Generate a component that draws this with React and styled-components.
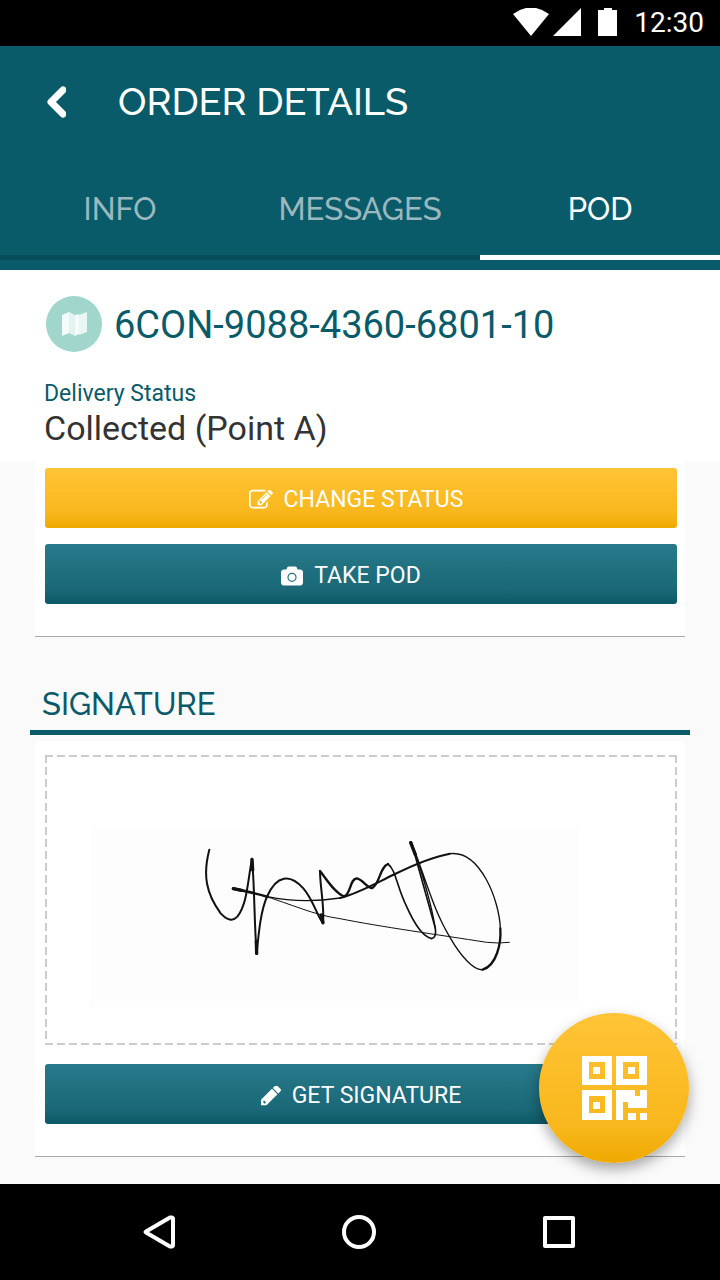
import React from "react";
import styled, { createGlobalStyle, css } from "styled-components";

const teal = "#0a5b69";

const GlobalStyle = createGlobalStyle`
  *, *::before, *::after { box-sizing: border-box; }
  body { margin: 0; background: #fafafa; font-family: Roboto, "Liberation Sans", sans-serif; }
  button { font: inherit; border: 0; padding: 0; margin: 0; cursor: pointer; }
  svg { display: block; flex: none; }
  h1, h2, p, dl, dd { margin: 0; font-weight: 400; }
`;

const Screen = styled.div`
  display: flex;
  flex-direction: column;
  min-height: 100vh;
`;

const StatusBar = styled.div`
  display: flex;
  align-items: center;
  justify-content: flex-end;
  height: 46px;
  padding-right: 16px;
  background: #000;
  color: #fff;
`;

const Clock = styled.time`
  margin-left: 15px;
  font-size: 28px;
  line-height: 32px;
`;

const Header = styled.header`
  background: ${teal};
  color: #fff;
  padding-bottom: 10px;
  font-family: Raleway, Lato, "Liberation Sans", sans-serif;
`;

const TitleRow = styled.div`
  display: flex;
  align-items: center;
  height: 112px;
  padding-left: 40px;
  gap: 46px;
`;

const BackButton = styled.button`
  display: flex;
  align-items: center;
  justify-content: center;
  width: 32px;
  height: 48px;
  background: none;
  color: #fff;
`;

const Title = styled.h1`
  font-size: 38px;
  font-weight: 500;
  line-height: 44px;
`;

const Tabs = styled.nav`
  display: grid;
  grid-template-columns: repeat(3, 1fr);
`;

const Tab = styled.button`
  height: 102px;
  padding-top: 4px;
  background: none;
  font-size: 31px;
  font-weight: 500;
  line-height: 36px;
  color: ${(p) => (p.$active ? "#fff" : "#9ab8be")};
  border-bottom: 5px solid ${(p) => (p.$active ? "#fff" : "#084c59")};
`;

const Main = styled.main`
  position: relative;
  flex: 1;
  padding-bottom: 26px;
`;

const Summary = styled.section`
  background: #fff;
  height: 192px;
  padding: 26px 44px 0;
`;

const OrderRow = styled.div`
  display: flex;
  align-items: center;
  gap: 12px;
  padding-left: 2px;
`;

const MapBadge = styled.span`
  display: flex;
  align-items: center;
  justify-content: center;
  width: 56px;
  height: 56px;
  border-radius: 50%;
  background: #a0d6cc;
`;

const OrderNumber = styled.h2`
  padding-top: 2px;
  font-size: 38px;
  line-height: 48px;
  color: ${teal};
`;

const StatusList = styled.dl`
  padding-top: 28px;
`;

const StatusLabel = styled.dt`
  font-size: 23px;
  line-height: 28px;
  color: ${teal};
`;

const StatusValue = styled.dd`
  font-size: 34px;
  line-height: 40px;
  color: #333;
`;

const Panel = styled.section`
  display: flex;
  flex-direction: column;
  margin: 0 35px;
  padding: ${(p) => p.$top}px 8px 32px 10px;
  background: #fff;
  border-bottom: 1px solid #aaa;
`;

const amber = css`linear-gradient(#ffc436, #f8b71c 75%, #efa900)`;
const petrol = css`linear-gradient(#287a8a, #1a6878 75%, #0b5866)`;

const ActionButton = styled.button`
  display: flex;
  align-items: center;
  justify-content: center;
  gap: 11px;
  height: 60px;
  padding: 3px ${(p) => p.$trail || 0}px 0 0;
  border-radius: 3px;
  background: ${(p) => (p.$primary ? amber : petrol)};
  color: #fff;
  font-size: 23px;
  line-height: 28px;

  & + & { margin-top: 16px; }
`;

const SectionTitle = styled.h2`
  margin: 48px 30px 6px;
  padding: 0 12px 7px;
  border-bottom: 5px solid ${teal};
  font-family: Raleway, Lato, "Liberation Sans", sans-serif;
  font-size: 31px;
  font-weight: 500;
  line-height: 38px;
  color: ${teal};
`;

const dashX = "repeating-linear-gradient(90deg, #ccc 0 8px, transparent 8px 12px)";
const dashY = "repeating-linear-gradient(#ccc 0 8px, transparent 8px 12px)";

const SignaturePad = styled.div`
  display: flex;
  align-items: center;
  padding: 71px 99px 38px 45px;
  margin-bottom: 19px;
  background:
    ${dashX} top / 100% 2px no-repeat,
    ${dashX} bottom / 100% 2px no-repeat,
    ${dashY} left / 2px 100% no-repeat,
    ${dashY} right / 2px 100% no-repeat;
`;

const SignatureSheet = styled.div`
  flex: 1;
  height: 181px;
  background: #fdfdfd;
`;

const ScanButton = styled.button`
  position: absolute;
  right: 31px;
  bottom: 21px;
  display: flex;
  align-items: center;
  justify-content: center;
  width: 150px;
  height: 150px;
  border-radius: 50%;
  background: ${amber};
  box-shadow: 0 6px 14px rgba(0, 0, 0, 0.35);
`;

const SystemNav = styled.nav`
  display: grid;
  grid-template-columns: repeat(3, 200px);
  justify-content: center;
  height: 96px;
  background: #000;
`;

const NavButton = styled.button`
  display: flex;
  align-items: center;
  justify-content: center;
  background: none;
`;

const SystemIcons = () => (
  <svg width="106" height="30" viewBox="0 0 106 30" fill="#fff" aria-hidden="true">
    <path d="M0 6Q18-7 36 6L18 28z" />
    <path d="M68 0v28H40z" />
    <path d="M85 2h6V0h8v2h5v26H85z" />
  </svg>
);

const EditIcon = () => (
  <svg width="24" height="24" viewBox="0 0 1792 1792" fill="currentColor" aria-hidden="true">
    <path d="M888 1184l116-116-152-152-116 116v56h96v96h56zm440-720q-16-16-33 1l-350 350q-17 17-1 33t33-1l350-350q17-17 1-33zm80 594v190q0 119-84.500 203.500t-203.500 84.500h-832q-119 0-203.500-84.500t-84.500-203.500v-832q0-119 84.500-203.500t203.500-84.500h832q63 0 117 25 15 7 18 23 3 17-9 29l-49 49q-14 14-32 8-23-6-45-6h-832q-66 0-113 47t-47 113v832q0 66 47 113t113 47h832q66 0 113-47t47-113v-126q0-13 9-22l64-64q15-15 35-7t20 29zm-96-738l288 288-672 672h-288v-288zm444 132l-92 92-288-288 92-92q28-28 68-28t68 28l152 152q28 28 28 68t-28 68z" />
  </svg>
);

const CameraIcon = () => (
  <svg width="22" height="20" viewBox="0 0 1920 1664" fill="currentColor" aria-hidden="true">
    <path
      fillRule="evenodd"
      d="M1664 256q106 0 181 75t75 181v896q0 106-75 181t-181 75h-1408q-106 0-181-75t-75-181v-896q0-106 75-181t181-75h224l51-136q19-49 69.500-84.500t103.500-35.500h512q53 0 103.500 35.500t69.500 84.500l51 136zM960 550a400 400 0 1 0 0 800a400 400 0 1 0 0-800zM960 650a300 300 0 1 1 0 600a300 300 0 1 1 0-600z"
    />
  </svg>
);

const PencilIcon = () => (
  <svg width="20" height="20" viewBox="128 256 1515 1408" fill="currentColor" aria-hidden="true">
    <path
      fillRule="evenodd"
      d="M960 416l416 416-832 832h-416v-416zM370 1310l-91 91v60h75v75h60l91-91zM1643 512q0 53-37 90l-166 166-416-416 166-165q36-38 90-38 53 0 91 38l235 234q37 39 37 91z"
    />
  </svg>
);

const MapIcon = () => (
  <svg width="26" height="26" viewBox="0 0 26 26" aria-hidden="true">
    <path d="M1 4l7-3v21l-7 3z" fill="#f4fbfa" />
    <path d="M8 1l6 3v21l-6-3z" fill="#e3f3f0" />
    <path d="M14 4l4-1v20l-4 2z" fill="#f4fbfa" />
    <path d="M18 4l8-3v20l-8 3z" fill="#e9f6f3" />
  </svg>
);

const QrIcon = () => (
  <svg width="64" height="64" viewBox="0 0 64 64" fill="#fff" fillRule="evenodd" overflow="visible" aria-hidden="true">
    <path d="M0 0h30v29H0zM7 6v17h16V6zM11 11h7v7h-7z" />
    <path d="M34 0h31v29H34zM41 6v17h16V6zM46 11h7v7h-7z" />
    <path d="M0 34h30v30H0zM7 40v17h16V40zM11 46h7v7h-7z" />
    <path d="M34 34h19v6h5v-6h7v18H46v-6h-5v18h-7zM46 57h8v7h-8zM58 57h7v7h-7z" />
  </svg>
);

const Signature = () => (
  <svg
    width="488"
    height="181"
    viewBox="270 18 1464 543"
    fill="none"
    stroke="#111"
    strokeLinecap="round"
    strokeLinejoin="round"
    role="img"
    aria-label="Customer signature"
  >
    <g transform="translate(540 0)">
      <path strokeWidth="6" d="M88 89C68 165 78 220 122 280Q152 312 172 290C202 250 202 190 216 116C224 200 222 300 230 402C236 340 242 270 262 228C290 165 330 160 370 205C400 240 410 285 429 310C434 260 420 200 420 153" />
      <path strokeWidth="7" d="M420 153C440 178 465 220 492 229C514 222 508 178 530 175C550 178 560 205 577 204C600 190 600 140 624 132" />
      <path strokeWidth="5" d="M624 132C648 150 650 200 680 260C700 305 728 350 755 356Q770 352 766 325L694 66" />
      <path strokeWidth="4" d="M766 325C752 240 720 140 694 66C742 190 760 270 810 352C840 405 880 452 908 449" />
      <path strokeWidth="7" d="M908 449C950 436 964 370 961 325" />
      <path strokeWidth="4" d="M961 325C958 240 900 90 810 101" />
      <path strokeWidth="6" d="M810 101C760 110 700 135 645 162C590 188 540 218 480 234" />
      <path strokeWidth="4" d="M480 234C400 246 330 244 262 230" />
      <path strokeWidth="8" d="M262 230Q210 216 160 206" />
      <path strokeWidth="3" d="M240 224C340 254 400 285 480 296C600 320 780 345 920 367Q955 371 988 367" />
      <path strokeWidth="10" d="M692 68L706 104M160 206L185 211M216 118L218 150M229 365L230 400M424 285L429 308" />
    </g>
  </svg>
);

export default function App() {
  return (
    <Screen>
      <GlobalStyle />
      <StatusBar>
        <SystemIcons />
        <Clock>12:30</Clock>
      </StatusBar>
      <Header>
        <TitleRow>
          <BackButton aria-label="Back">
            <svg width="20" height="32" viewBox="0 0 20 32" fill="none" stroke="currentColor" strokeWidth="7" strokeLinecap="round" strokeLinejoin="round" aria-hidden="true">
              <path d="M17 4L5 16L17 28" />
            </svg>
          </BackButton>
          <Title>ORDER DETAILS</Title>
        </TitleRow>
        <Tabs aria-label="Order sections">
          <Tab>INFO</Tab>
          <Tab>MESSAGES</Tab>
          <Tab $active aria-current="page">POD</Tab>
        </Tabs>
      </Header>
      <Main>
        <Summary>
          <OrderRow>
            <MapBadge><MapIcon /></MapBadge>
            <OrderNumber>6CON-9088-4360-6801-10</OrderNumber>
          </OrderRow>
          <StatusList>
            <StatusLabel>Delivery Status</StatusLabel>
            <StatusValue>Collected (Point A)</StatusValue>
          </StatusList>
        </Summary>
        <Panel $top={6}>
          <ActionButton $primary $trail={10}><EditIcon />CHANGE STATUS</ActionButton>
          <ActionButton $trail={20}><CameraIcon />TAKE POD</ActionButton>
        </Panel>
        <SectionTitle>SIGNATURE</SectionTitle>
        <Panel $top={14}>
          <SignaturePad>
            <SignatureSheet><Signature /></SignatureSheet>
          </SignaturePad>
          <ActionButton><PencilIcon />GET SIGNATURE</ActionButton>
        </Panel>
        <ScanButton aria-label="Scan code"><QrIcon /></ScanButton>
      </Main>
      <SystemNav aria-label="System">
        <NavButton aria-label="Back">
          <svg width="36" height="36" viewBox="0 0 36 36" fill="none" stroke="#fff" strokeWidth="4" strokeLinejoin="round" aria-hidden="true">
            <path d="M4 17.500Q3 18 4 18.500L28 32.500Q31 33 31 31V5Q31 3 28 3.500z" />
          </svg>
        </NavButton>
        <NavButton aria-label="Home">
          <svg width="36" height="36" viewBox="0 0 36 36" fill="none" stroke="#fff" strokeWidth="4" aria-hidden="true">
            <circle cx="17" cy="18" r="15" />
          </svg>
        </NavButton>
        <NavButton aria-label="Recent apps">
          <svg width="36" height="36" viewBox="0 0 36 36" fill="none" stroke="#fff" strokeWidth="4" strokeLinejoin="round" aria-hidden="true">
            <path d="M3 4h28v28H3z" />
          </svg>
        </NavButton>
      </SystemNav>
    </Screen>
  );
}
